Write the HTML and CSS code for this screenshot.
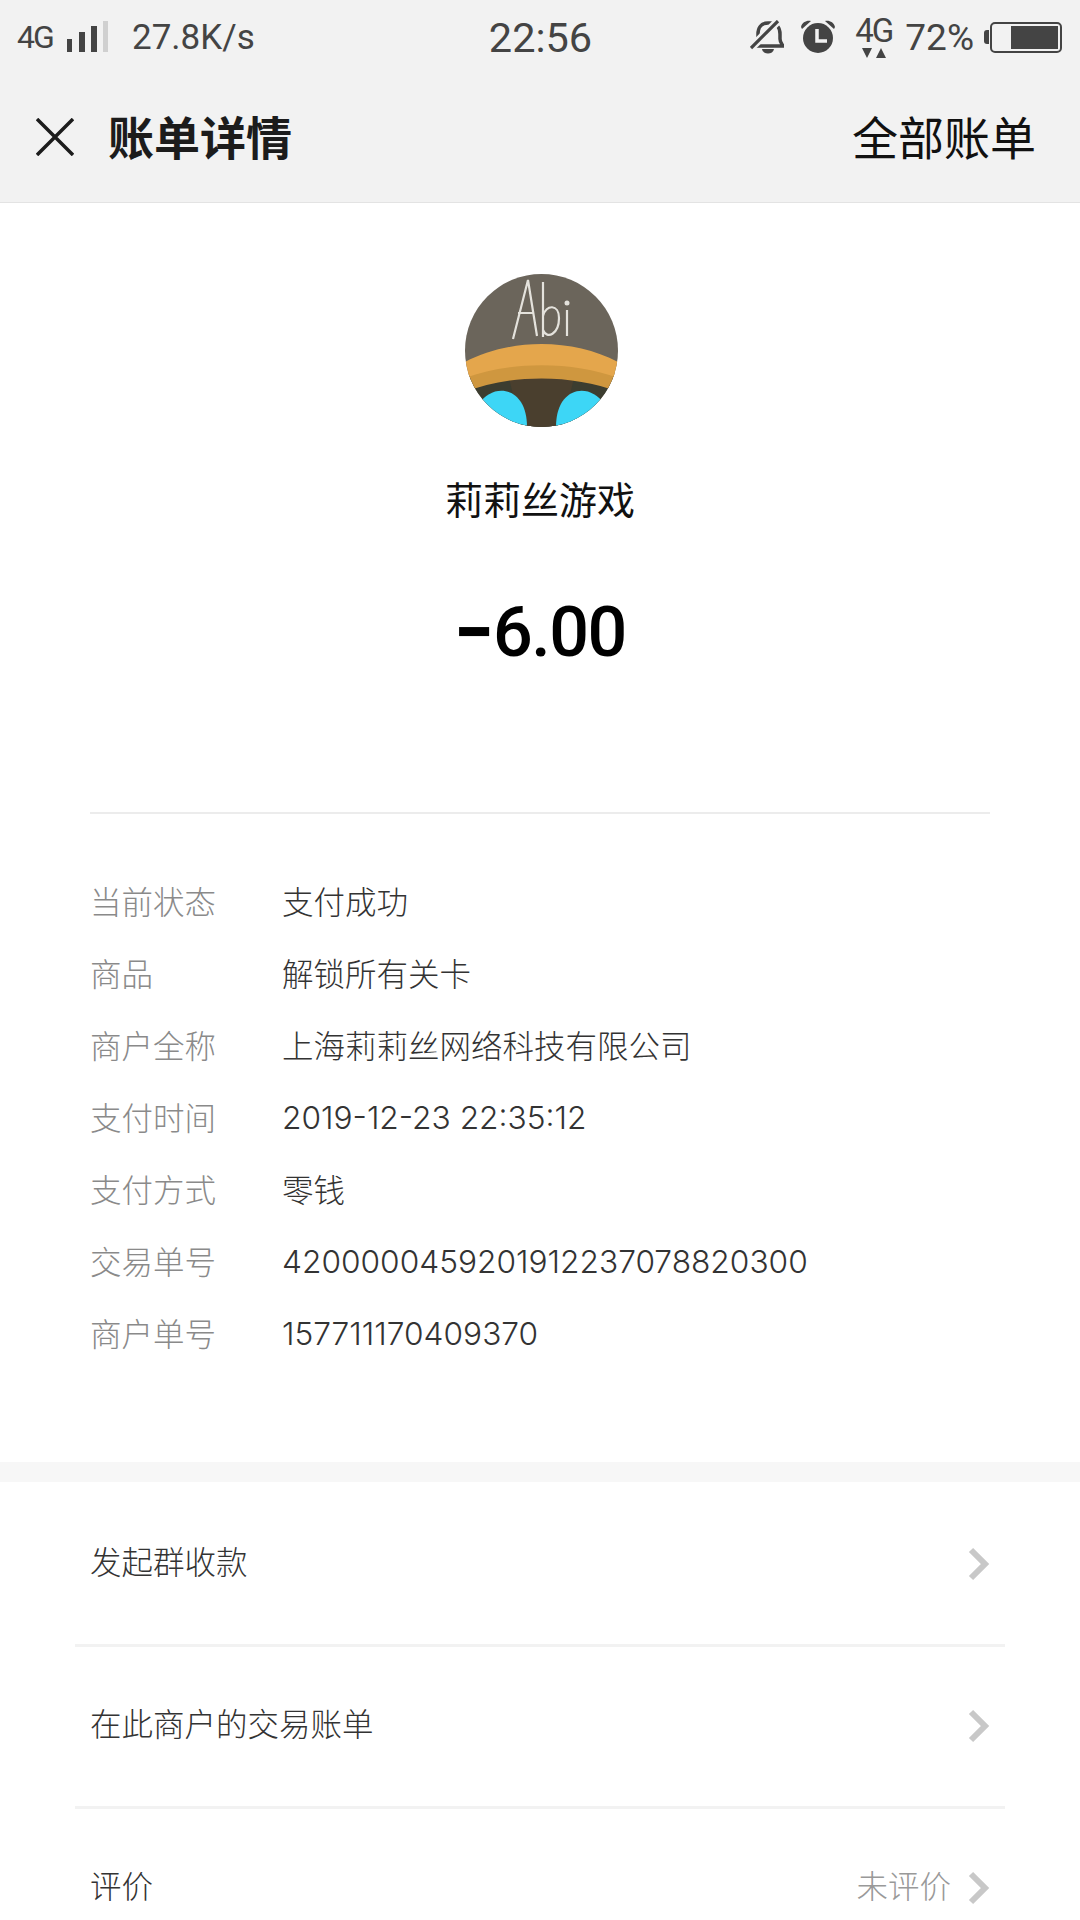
FILE: index.html
```html
<!DOCTYPE html>
<html lang="zh">
<head>
<meta charset="utf-8">
<title>账单详情</title>
<link rel="stylesheet" href="styles.css">
</head>
<body>
<div class="page">
  <header class="top">
    <div class="status">
      <div class="status-left">
        <span class="net">4G</span>
        <svg class="signal" width="42" height="32" viewBox="0 0 42 32"><rect x="1" y="18" width="5" height="13" fill="#444"/><rect x="13" y="11" width="6" height="20" fill="#444"/><rect x="25" y="5" width="6" height="26" fill="#444"/><rect x="37" y="0" width="5" height="31" fill="#d0d0d0"/></svg>
        <span class="speed">27.8K/s</span>
      </div>
      <div class="time">22:56</div>
      <div class="status-right">
        <svg class="bell" width="34" height="34" viewBox="0 0 34 34"><path d="M18 3c-7 0-10 5-10 11v5c0 3-2 5-3 7h28c-1-2-3-4-3-7v-5c0-6-3-11-10-11z" fill="none" stroke="#444" stroke-width="3.500"/><path d="M12 29h12c-1 6-11 6-12 0z" fill="#444"/><path d="M1 28L28 1" stroke="#f2f2f2" stroke-width="8"/><path d="M1 28L28 1" stroke="#444" stroke-width="3.200"/></svg>
        <svg class="alarm" width="34" height="34" viewBox="0 0 34 34"><circle cx="17" cy="18" r="15" fill="#444"/><path d="M0 7C1 2 6 0 10 1L1 9zM34 7C33 2 28 0 24 1L33 9z" fill="#444"/><path d="M16 9v12h10" fill="none" stroke="#f2f2f2" stroke-width="3.500"/></svg>
        <div class="net-up">
          <span class="net-up-label">4G</span>
          <svg class="net-arrows" width="24" height="10" viewBox="0 0 24 10"><path d="M0 0h10l-5 10zM14 10h10l-5-10z" fill="#444"/></svg>
        </div>
        <span class="pct">72%</span>
        <div class="battery">
          <span class="battery-nub"></span>
          <span class="battery-body"><span class="battery-fill"></span></span>
        </div>
      </div>
    </div>
    <div class="nav">
      <svg class="close" width="38" height="38" viewBox="0 0 38 38"><path d="M1 1l36 36M37 1L1 37" stroke="#1c1c1c" stroke-width="3.500" fill="none"/></svg>
      <h1 class="nav-title">账单详情</h1>
      <a class="nav-link">全部账单</a>
    </div>
  </header>

  <section class="summary">
    <svg class="avatar" width="153" height="153" viewBox="0 0 153 153">
      <defs><clipPath id="round"><circle cx="76.500" cy="76.500" r="76.500"/></clipPath></defs>
      <g clip-path="url(#round)">
        <rect width="153" height="153" fill="#6b655b"/>
        <path d="M0 100H153V160H0z" fill="#3c3d30"/>
        <path d="M44 104H109L97 153H56z" fill="#4a3f2e"/>
        <path d="M0 100C45 82 108 82 153 100V118C108 100 45 100 0 118z" fill="#cf973f"/>
        <path d="M0 88C45 64 108 64 153 88V104C108 87 45 87 0 104z" fill="#e4a64c"/>
        <path d="M14 130C28 108 62 112 62 153H18z" fill="#3dd6f6"/>
        <path d="M139 130C125 108 91 112 91 153H135z" fill="#3dd6f6"/>
        <path d="M48 65L63 6L72 62M53 39H69" fill="none" stroke="#e4e2dc" stroke-width="2.200"/>
        <path d="M78 8V63M78 42C81 30 94 30 94 44C94 60 82 66 78 56M102 36V62" fill="none" stroke="#e4e2dc" stroke-width="2.200"/>
        <circle cx="102" cy="29" r="2.500" fill="#e4e2dc"/>
      </g>
    </svg>
    <div class="merchant">莉莉丝游戏</div>
    <div class="amount"><span class="minus">−</span>6.00</div>
  </section>

  <section class="details">
    <dl class="detail-list">
      <div class="detail-row"><dt>当前状态</dt><dd>支付成功</dd></div>
      <div class="detail-row"><dt>商品</dt><dd>解锁所有关卡</dd></div>
      <div class="detail-row"><dt>商户全称</dt><dd>上海莉莉丝网络科技有限公司</dd></div>
      <div class="detail-row"><dt>支付时间</dt><dd class="num">2019-12-23 22:35:12</dd></div>
      <div class="detail-row"><dt>支付方式</dt><dd>零钱</dd></div>
      <div class="detail-row"><dt>交易单号</dt><dd class="num">4200000459201912237078820300</dd></div>
      <div class="detail-row"><dt>商户单号</dt><dd class="num">157711170409370</dd></div>
    </dl>
  </section>

  <section class="actions">
    <div class="action"><span class="action-label">发起群收款</span><span class="action-right"><svg class="chev" width="22" height="34" viewBox="0 0 22 34"><path d="M3 3l14 14L3 31" fill="none" stroke="#c8c8c8" stroke-width="6"/></svg></span></div>
    <div class="action"><span class="action-label">在此商户的交易账单</span><span class="action-right"><svg class="chev" width="22" height="34" viewBox="0 0 22 34"><path d="M3 3l14 14L3 31" fill="none" stroke="#c8c8c8" stroke-width="6"/></svg></span></div>
    <div class="action"><span class="action-label">评价</span><span class="action-right"><span class="action-note">未评价</span><svg class="chev" width="22" height="34" viewBox="0 0 22 34"><path d="M3 3l14 14L3 31" fill="none" stroke="#c8c8c8" stroke-width="6"/></svg></span></div>
  </section>
</div>
</body>
</html>
```
FILE: styles.css
```css
* { box-sizing: border-box; margin: 0; padding: 0; }
html, body { background: #fff; }
body { font-family: "Noto Sans CJK SC", Roboto, sans-serif; }
.page { width: 1080px; height: 1920px; overflow: hidden; background: #fff; }

.top { height: 203px; background: #f2f2f2; border-bottom: 1px solid #e3e3e3; }
.status { height: 74px; padding: 0 18px 0 17px; display: grid; grid-template-columns: 1fr auto 1fr; align-items: center; color: #444; font-family: Roboto, sans-serif; }
.status-left { display: flex; align-items: center; }
.net { font-size: 32px; letter-spacing: -2px; width: 49px; }
.signal { margin-right: 24px; }
.speed { font-size: 35px; }
.time { font-size: 41.500px; margin-left: 2px; }
.status-right { display: flex; align-items: center; justify-content: flex-end; }
.bell { margin-right: 17px; }
.alarm { margin-right: 20px; }
.net-up { display: flex; flex-direction: column; align-items: center; width: 37px; margin-right: 13px; }
.net-up-label { font-size: 33px; line-height: 28px; letter-spacing: -2px; }
.net-arrows { margin-top: 3px; }
.pct { font-size: 37px; margin-right: 10px; }
.battery { display: flex; align-items: center; }
.battery-nub { width: 5px; height: 14px; background: #444; border-radius: 3px 0 0 3px; margin-right: 1px; }
.battery-body { width: 72px; height: 31px; border: 2px solid #444; border-radius: 5px; padding: 2px; display: flex; justify-content: flex-end; }
.battery-fill { width: 47px; background: #444; }

.nav { height: 128px; padding: 0 44px 4px 36px; display: flex; align-items: center; }
.close { margin-right: 34px; margin-top: 1px; }
.nav-title { font-size: 46px; font-weight: 700; color: #1c1c1c; flex: 1; line-height: 1.2; }
.nav-link { font-size: 46px; color: #111; line-height: 1.2; }

.summary { height: 609px; display: flex; flex-direction: column; align-items: center; padding-top: 71px; }
.avatar { display: block; margin-left: 2px; }
.merchant { margin-top: 45px; font-size: 38px; line-height: 52px; color: #111; }
.amount { margin-top: 69px; font-family: Roboto, sans-serif; font-size: 70px; line-height: 78px; font-weight: 500; color: #000; letter-spacing: -1.500px; }
.minus { font-weight: 900; margin-right: 2px; }

.details { margin: 0 90px; border-top: 2px solid #ececec; height: 650px; padding-top: 51px; }
.detail-list { display: flex; flex-direction: column; }
.detail-row { height: 72px; display: flex; align-items: center; font-size: 31.500px; font-weight: 300; line-height: 1.2; }
.detail-row dt { width: 192px; color: #8a8a8a; }
.detail-row dd { color: #333; }
.detail-row .num { font-family: Inter, sans-serif; font-size: 31.700px; margin-top: 2px; }

.actions { border-top: 20px solid #f7f7f7; padding: 3px 75px 0; }
.action { height: 162px; display: flex; align-items: center; justify-content: space-between; padding: 0 15px 8px; border-bottom: 3px solid #f2f2f2; }
.action-label { font-size: 31.500px; font-weight: 300; color: #333; line-height: 1.2; }
.action-right { display: flex; align-items: center; }
.action-note { font-size: 31.500px; font-weight: 300; color: #999; margin-right: 17px; line-height: 1.2; }
.chev { display: block; margin-top: 6px; }
```
